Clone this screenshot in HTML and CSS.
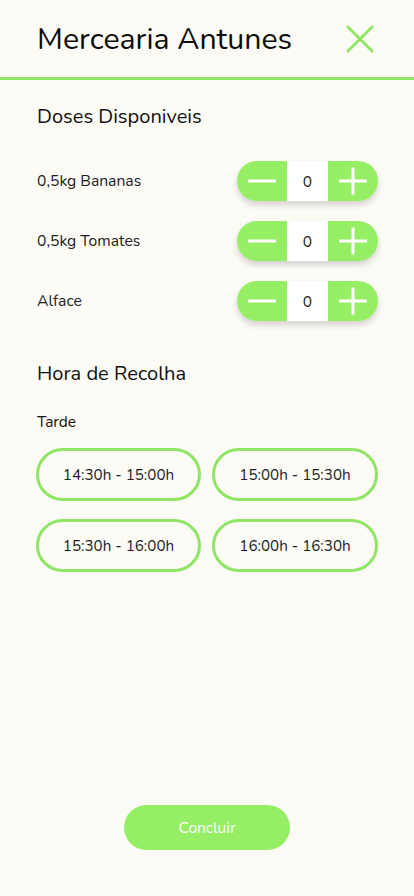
FILE: index.html
```html
<!DOCTYPE html>
<html lang="pt">
<head>
<meta charset="utf-8">
<title>Mercearia Antunes</title>
<link rel="stylesheet" href="styles.css">
</head>
<body>
<div class="page">
  <header class="header">
    <h1 class="title">Mercearia Antunes</h1>
    <svg class="close" width="30" height="30" viewBox="0 0 30 30" aria-label="Fechar">
      <path d="M3 3 L27 27 M27 3 L3 27" stroke="#90e664" stroke-width="3" stroke-linecap="round" fill="none"/>
    </svg>
  </header>
  <main class="content">
    <h2 class="section-title">Doses Disponiveis</h2>
    <div class="items">
      <div class="item">
        <span class="item-label">0,5kg Bananas</span>
        <div class="stepper">
          <button class="step-btn"><svg width="30" height="30" viewBox="0 0 30 30"><path d="M1 15 H29" stroke="#fff" stroke-width="3"/></svg></button>
          <span class="step-val">0</span>
          <button class="step-btn"><svg width="30" height="30" viewBox="0 0 30 30"><path d="M1 15 H29 M15 1.5 V28.5" stroke="#fff" stroke-width="3"/></svg></button>
        </div>
      </div>
      <div class="item">
        <span class="item-label">0,5kg Tomates</span>
        <div class="stepper">
          <button class="step-btn"><svg width="30" height="30" viewBox="0 0 30 30"><path d="M1 15 H29" stroke="#fff" stroke-width="3"/></svg></button>
          <span class="step-val">0</span>
          <button class="step-btn"><svg width="30" height="30" viewBox="0 0 30 30"><path d="M1 15 H29 M15 1.5 V28.5" stroke="#fff" stroke-width="3"/></svg></button>
        </div>
      </div>
      <div class="item">
        <span class="item-label">Alface</span>
        <div class="stepper">
          <button class="step-btn"><svg width="30" height="30" viewBox="0 0 30 30"><path d="M1 15 H29" stroke="#fff" stroke-width="3"/></svg></button>
          <span class="step-val">0</span>
          <button class="step-btn"><svg width="30" height="30" viewBox="0 0 30 30"><path d="M1 15 H29 M15 1.5 V28.5" stroke="#fff" stroke-width="3"/></svg></button>
        </div>
      </div>
    </div>

    <h2 class="section-title section-title--second">Hora de Recolha</h2>
    <p class="period">Tarde</p>
    <div class="slots">
      <button class="slot">14:30h - 15:00h</button>
      <button class="slot">15:00h - 15:30h</button>
      <button class="slot">15:30h - 16:00h</button>
      <button class="slot">16:00h - 16:30h</button>
    </div>
  </main>
  <footer class="footer">
    <button class="submit">Concluir</button>
  </footer>
</div>
</body>
</html>
```

FILE: styles.css
```css
* { box-sizing: border-box; }

html, body {
  margin: 0;
  padding: 0;
  background: #fcfbf6;
}

body {
  font-family: "Nunito", Lato, "Noto Sans", sans-serif;
  color: #111;
}

.page {
  min-height: 896px;
  display: flex;
  flex-direction: column;
}

.header {
  height: 80px;
  padding: 0 39px 0 37px;
  display: flex;
  align-items: center;
  justify-content: space-between;
  border-bottom: 3px solid #90e664;
}

.title {
  margin: 0;
  font-size: 30.3px;
  font-weight: 400;
  line-height: 36px;
  color: #0c0c0c;
}

.close { display: block; margin-top: 1px; }

.content {
  padding: 25px 36px 0 37px;
}

.section-title {
  margin: 0;
  font-size: 20.1px;
  font-weight: 400;
  line-height: 24px;
  color: #111;
}

.items {
  margin-top: 32px;
  display: flex;
  flex-direction: column;
  gap: 20px;
}

.item {
  height: 40px;
  display: flex;
  align-items: center;
  justify-content: space-between;
}

.item-label {
  font-size: 15.7px;
  color: #1c1c1c;
}

.stepper {
  width: 141px;
  height: 40px;
  display: flex;
  border-radius: 20px;
  overflow: hidden;
  box-shadow: 0 4px 6px rgba(0, 0, 0, 0.16);
}

.step-btn {
  width: 50px;
  height: 40px;
  border: 0;
  padding: 0;
  background: #96ee64;
  display: flex;
  align-items: center;
  justify-content: center;
}

.step-btn svg { display: block; }

.step-val {
  width: 41px;
  background: #fff;
  display: flex;
  align-items: center;
  justify-content: center;
  font-size: 15.5px;
  color: #1c1c1c;
}

.section-title--second {
  margin-top: 41px;
}

.period {
  margin: 26px 0 0;
  font-size: 15.5px;
  line-height: 20px;
  color: #111;
}

.slots {
  margin-top: 16px;
  display: grid;
  grid-template-columns: 165px 166px;
  column-gap: 11px;
  row-gap: 18px;
  margin-left: -1px;
}

.slot {
  height: 53px;
  border: 3px solid #90e664;
  border-radius: 27px;
  background: transparent;
  font-family: inherit;
  font-size: 15.2px;
  color: #1c1c1c;
  padding: 0;
}

.footer {
  margin-top: auto;
  padding-bottom: 46px;
  display: flex;
  justify-content: center;
}

.submit {
  width: 166px;
  height: 45px;
  border: 0;
  border-radius: 23px;
  background: #96ee64;
  color: #fff;
  font-family: inherit;
  font-size: 15.5px;
}
```
